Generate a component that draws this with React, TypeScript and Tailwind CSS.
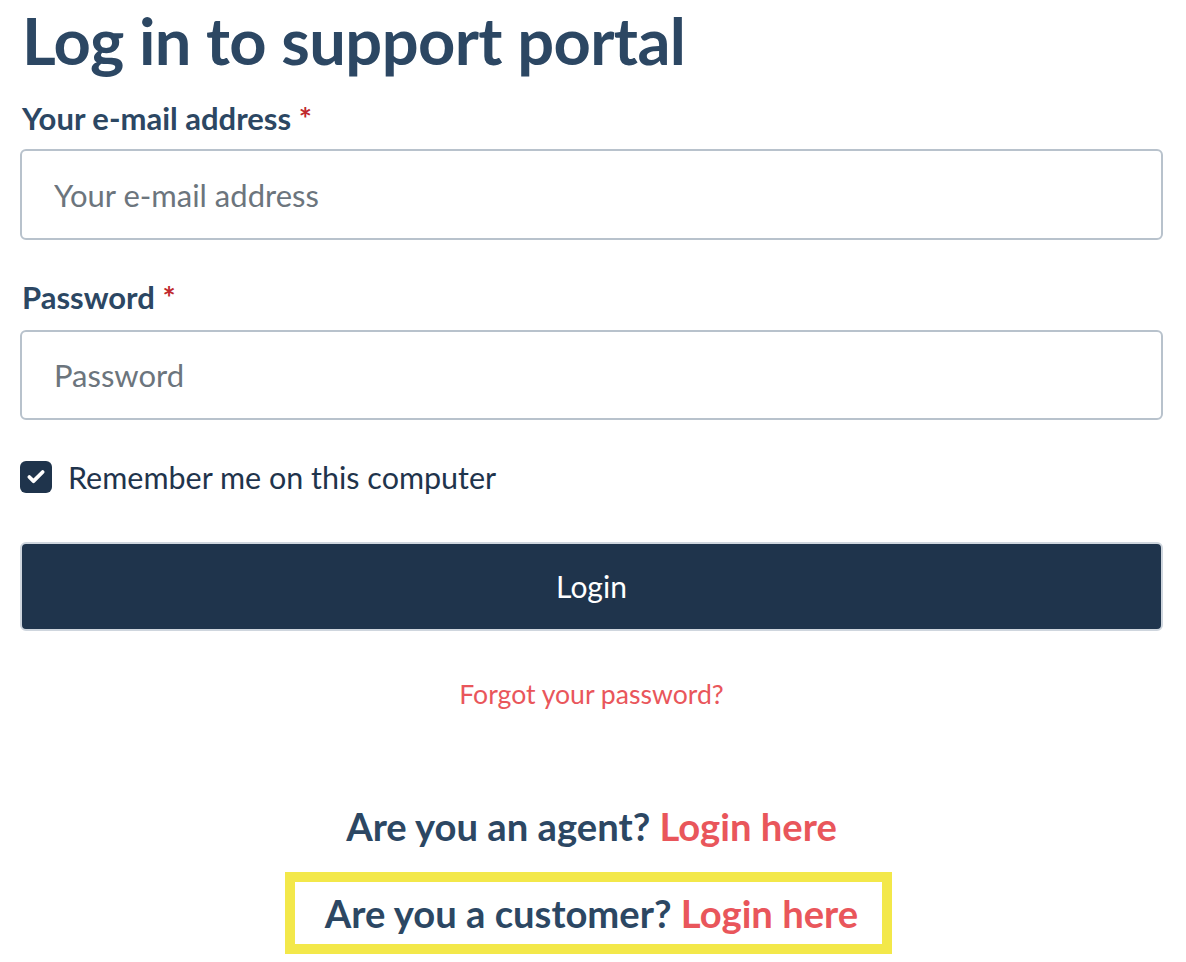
import { Check } from "lucide-react";

export default function App() {
    return (
        <div className="min-h-screen bg-white pl-[20px] pr-[23px] font-['Lato',sans-serif] text-[#2c4763]">
            <h1 className="text-[65px] leading-[80px] font-bold tracking-[-0.6px] pl-[2px]">Log in to support portal</h1>

            <form className="flex flex-col" onSubmit={(e) => e.preventDefault()}>
                <label className="mt-[20px] text-[31px] leading-[36px] font-bold pl-[2px]">
                    Your e-mail address <span className="text-[#c0282d]">*</span>
                </label>
                <input
                    type="email"
                    placeholder="Your e-mail address"
                    className="mt-[13px] h-[91px] w-full rounded-[6px] border-2 border-[#b8c2cc] px-[32px] text-[31px] text-[#1f344c] placeholder:text-[#6c757d] outline-none"
                />

                <label className="mt-[39px] text-[31px] leading-[36px] font-bold pl-[2px]">
                    Password <span className="text-[#c0282d]">*</span>
                </label>
                <input
                    type="password"
                    placeholder="Password"
                    className="mt-[15px] h-[90px] w-full rounded-[6px] border-2 border-[#b8c2cc] px-[32px] text-[31px] text-[#1f344c] placeholder:text-[#6c757d] outline-none"
                />

                <label className="mt-[41px] flex items-center gap-[16px] text-[30.5px] leading-[32px] text-[#1f344c]">
                    <span className="flex h-[32px] w-[32px] items-center justify-center rounded-[6px] bg-[#1f344c]">
                        <Check size={20} strokeWidth={4.5} className="text-white" />
                    </span>
                    Remember me on this computer
                </label>

                <button
                    type="submit"
                    className="mt-[49px] h-[89px] w-full rounded-[6px] border-2 border-[#cfd6de] bg-[#1f344c] text-[30px] text-white"
                >
                    Login
                </button>
            </form>

            <p className="mt-[45px] text-center text-[26.6px] leading-[36px] text-[#e9565b]">Forgot your password?</p>

            <p className="mt-[90px] text-center text-[38.2px] leading-[48px] font-bold">
                Are you an agent? <span className="text-[#e9565b]">Login here</span>
            </p>

            <div className="ml-[265px] mt-[22px] flex h-[82px] w-[607px] items-center justify-center border-[10px] border-[#f3e84a] pl-[6px]">
                <p className="text-[38.2px] leading-[48px] font-bold">
                    Are you a customer? <span className="text-[#e9565b]">Login here</span>
                </p>
            </div>
        </div>
    );
}
